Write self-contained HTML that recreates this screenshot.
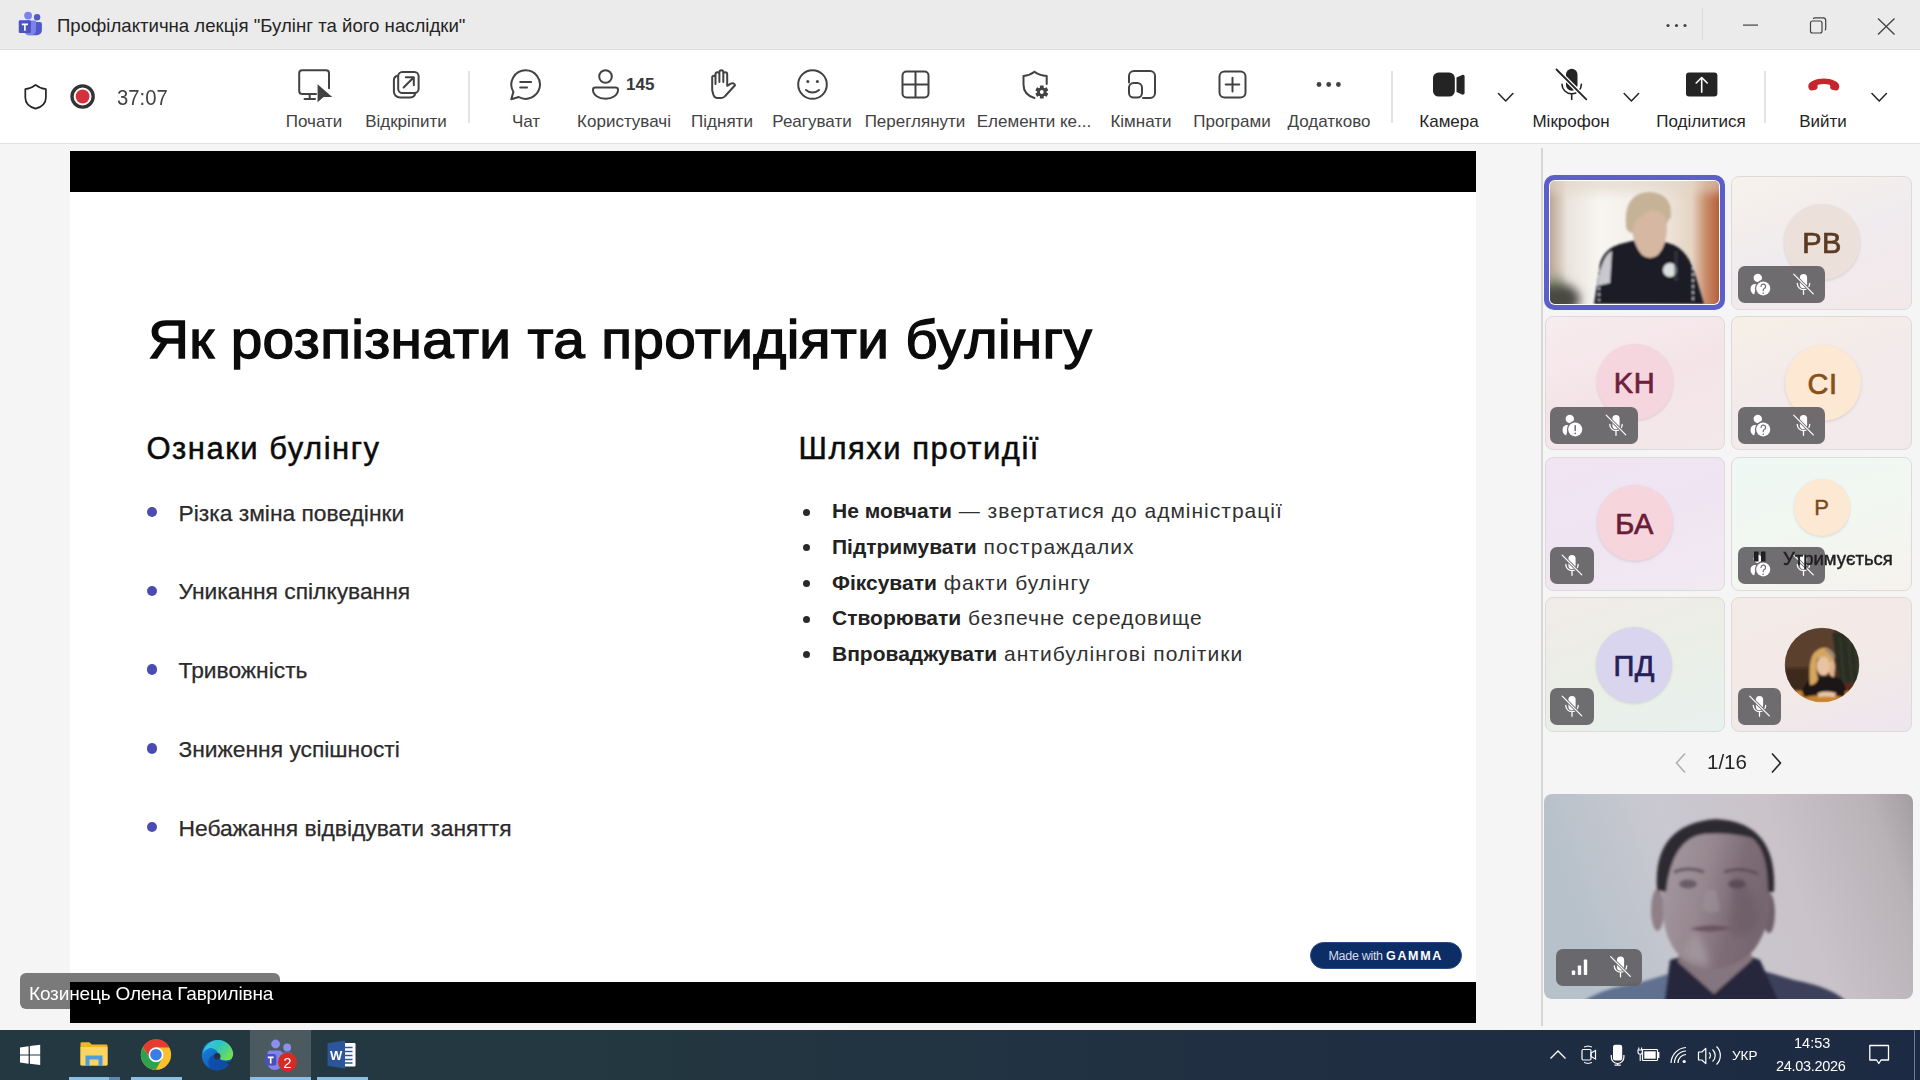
<!DOCTYPE html>
<html><head><meta charset="utf-8">
<style>
*{margin:0;padding:0;box-sizing:border-box}
html,body{width:1920px;height:1080px;overflow:hidden;background:#f5f5f5;font-family:"Liberation Sans",sans-serif;position:relative}
.a{position:absolute}
#titlebar{left:0;top:0;width:1920px;height:49px;background:#ebebeb}
#tbline{left:0;top:49px;width:1920px;height:1px;background:#dedede}
#toolbar{left:0;top:50px;width:1920px;height:93px;background:#fff}
#tlline{left:0;top:143px;width:1920px;height:1px;background:#e0e0e0}
#slide{left:70px;top:151px;width:1406px;height:872px;background:#fff}
.bar{left:0;width:1406px;background:#000}
#divider{left:1541px;top:148px;width:2px;height:878px;background:#d6d6d6}
#taskbar{left:0;top:1030px;width:1920px;height:50px;background:linear-gradient(90deg,#243841 0%,#233840 30%,#202f42 65%,#1d2a43 100%)}
.t{position:absolute;white-space:nowrap;line-height:1}
.lbl{position:absolute;white-space:nowrap;line-height:1;font-size:17px;color:#424242;top:113px;transform:translateX(-50%)}
.sep{position:absolute;width:2px;background:#e3e3e3;top:71px;height:52px}
.li{left:178.5px;font-size:22.8px;color:#2c2a2a;letter-spacing:0px;-webkit-text-stroke:0.25px #2c2a2a;margin-top:-0.5px}
.ri{left:832px;font-size:21px;color:#303030;letter-spacing:1px}
.ri b{color:#222;letter-spacing:0}
.rd{left:802.5px;width:7px;height:7px;border-radius:50%;background:#2a2a2a}
.tile{border:1px solid #e0d9d9;border-radius:8px}
.av{width:76px;height:76px;border-radius:50%;text-align:center;line-height:78px;font-size:29px;font-weight:normal;-webkit-text-stroke:0.7px currentColor;letter-spacing:0.5px;box-shadow:0 1px 3px rgba(0,0,0,.12)}
.pill{height:37px;border-radius:7px;background:rgba(96,94,98,.9)}
</style></head>
<body>
<div id="titlebar" class="a"></div>
<div id="tbline" class="a"></div>
<div id="toolbar" class="a"></div>
<div id="tlline" class="a"></div>

<!-- title text -->
<div class="t" style="left:57px;top:16.8px;font-size:18.6px;color:#242424">Профілактична лекція "Булінг та його наслідки"</div>
<div class="t" style="left:117px;top:86.5px;font-size:22.5px;color:#424242;transform:scaleX(0.9);transform-origin:0 0">37:07</div>
<div class="t" style="left:626px;top:76px;font-size:17px;font-weight:bold;color:#383838">145</div>

<div class="lbl" style="left:314px">Почати</div>
<div class="lbl" style="left:406px">Відкріпити</div>
<div class="lbl" style="left:526px">Чат</div>
<div class="lbl" style="left:624px">Користувачі</div>
<div class="lbl" style="left:722px">Підняти</div>
<div class="lbl" style="left:812px">Реагувати</div>
<div class="lbl" style="left:915px">Переглянути</div>
<div class="lbl" style="left:1034px">Елементи ке...</div>
<div class="lbl" style="left:1141px">Кімнати</div>
<div class="lbl" style="left:1232px">Програми</div>
<div class="lbl" style="left:1329px">Додатково</div>
<div class="lbl" style="left:1449px;color:#242424">Камера</div>
<div class="lbl" style="left:1571px;color:#242424">Мікрофон</div>
<div class="lbl" style="left:1701px;color:#242424">Поділитися</div>
<div class="lbl" style="left:1823px;color:#242424">Вийти</div>

<div class="sep" style="left:468px"></div>
<div class="sep" style="left:1391px"></div>
<div class="sep" style="left:1764px"></div>

<svg class="a" style="left:0;top:0" width="1920" height="150" viewBox="0 0 1920 150">
  <!-- teams logo -->
  <circle cx="28.1" cy="15.6" r="3.9" fill="#7b83eb"/>
  <circle cx="37.1" cy="17.3" r="3.2" fill="#5059c9"/>
  <path d="M32 21.9h8a1.9 1.9 0 0 1 1.9 1.9v6.4a5 5 0 0 1-5 5h-4.9z" fill="#5059c9"/>
  <path d="M26.6 20.6h8.4a1 1 0 0 1 1 1v8.5a5.5 5.5 0 0 1-5.5 5.5h-1a5.5 5.5 0 0 1-4.9-3z" fill="#7b83eb"/>
  <rect x="18.75" y="20.3" width="12.2" height="12.8" rx="1.3" fill="#4b53bc"/>
  <path d="M21.8 23.6h6.2v1.6h-2.3v5.6h-1.6v-5.6h-2.3z" fill="#fff"/>
  <!-- window controls -->
  <circle cx="1668" cy="25.5" r="1.6" fill="#424242"/><circle cx="1676.5" cy="25.5" r="1.6" fill="#424242"/><circle cx="1685" cy="25.5" r="1.6" fill="#424242"/>
  <rect x="1702" y="8" width="1" height="32" fill="#dcdcdc"/>
  <rect x="1743" y="24.5" width="15" height="1.2" fill="#424242"/>
  <rect x="1810.5" y="21" width="11.5" height="12" rx="2" fill="none" stroke="#424242" stroke-width="1.2"/>
  <path d="M1813.5 19v-0.2a1 1 0 0 1 1-1h8.7a2.5 2.5 0 0 1 2.5 2.5v8.7a1 1 0 0 1-1 1" fill="none" stroke="#424242" stroke-width="1.2"/>
  <path d="M1878 18.5l16.5 16M1894.5 18.5l-16.5 16" stroke="#424242" stroke-width="1.3"/>

  <!-- shield -->
  <path d="M35.6 84.8c-3.3 2.7-6.8 4-10.3 4.4v8.2c0 5.6 3.5 9.3 10.3 11.2 6.8-1.9 10.3-5.6 10.3-11.2v-8.2c-3.5-.4-7-1.7-10.3-4.4z" fill="none" stroke="#242424" stroke-width="1.7" stroke-linejoin="round"/>
  <!-- record -->
  <circle cx="82.6" cy="96.5" r="10.6" fill="#fff" stroke="#333" stroke-width="3.3"/>
  <circle cx="82.6" cy="96.5" r="6.9" fill="#d6303a"/>

  <g fill="none" stroke="#424242" stroke-width="2" stroke-linecap="round" stroke-linejoin="round">
    <!-- Pochaty: monitor + cursor -->
    <path d="M317 93.9H302.2a3 3 0 0 1-3-3V73.2a3 3 0 0 1 3-3h23.8a3 3 0 0 1 3 3v15"/>
    <path d="M309.7 94v5M304.5 99h10.5"/>
    <!-- Vidkripyty -->
    <path d="M397.5 75.8a4.5 4.5 0 0 0-3.6 4.4v11.3a6 6 0 0 0 6 6h10.8a4.6 4.6 0 0 0 4.4-3.4"/>
    <rect x="398.2" y="71.9" width="20.4" height="21" rx="4.2"/>
    <path d="M403.6 87.5l10.2-10.2M405.8 77.2h8v8"/>
    <!-- Chat -->
    <path d="M525.7 70.2a14.3 14.3 0 1 1-7 26.8l-7.4 2.2 2.1-7.3a14.3 14.3 0 0 1 12.3-21.7z"/>
    <path d="M520.2 81.9h10.9M520.2 87.6h6.8"/>
    <!-- person -->
    <circle cx="605.5" cy="76.5" r="6.3"/>
    <path d="M595.3 87.4h20.4a2.3 2.3 0 0 1 2.3 2.3c0 5.4-5.5 9-12.5 9s-12.5-3.6-12.5-9a2.3 2.3 0 0 1 2.3-2.3z"/>
    <!-- hand -->
    <path d="M715.5 84V74.3a1.95 1.95 0 0 1 3.9 0V82M719.4 82V72.3a1.95 1.95 0 0 1 3.9 0V82M723.3 82V74.3a1.95 1.95 0 0 1 3.9 0V85.8l3.6-2.1c1.8-1 3.8-.5 4.2 1.6L725.2 96c-1 1.3-2.4 2-4 2h-3.6c-2 0-3.6-1.3-4.2-3.2l-1.2-4.6V77.3a1.6 1.6 0 0 1 3.3 0V84"/>
    <!-- smiley -->
    <circle cx="812.5" cy="84.5" r="14.3"/>
    <path d="M806 90c3.6 3.3 9.4 3.3 13 0"/>
  </g><circle cx="807.8" cy="81.6" r="1.5" fill="#424242"/><circle cx="817.4" cy="81.6" r="1.5" fill="#424242"/><g fill="none" stroke="#424242" stroke-width="2" stroke-linecap="round" stroke-linejoin="round">
    <!-- grid -->
    <rect x="902.5" y="71.5" width="26" height="26" rx="4"/>
    <path d="M915.5 72.5v24M903.5 84.5h24"/>
    <!-- shield gear -->
    <path d="M1034.5 71.8c-3.3 2.6-7 3.9-11 4.3v8.3c0 6.7 4.1 11.5 11 13.6M1046.7 84V76.1c-4-.4-8.9-1.7-12.2-4.3"/>
    <!-- rooms -->
    <path d="M1129 82.5v-6.5a5 5 0 0 1 5-5h16a5 5 0 0 1 5 5v17a5 5 0 0 1-5 5h-7"/>
    <rect x="1129" y="83" width="13" height="14.6" rx="4.6"/>
    <!-- apps -->
    <rect x="1219.5" y="71.5" width="26" height="26" rx="5"/>
    <path d="M1232.5 77.8v13.6M1225.7 84.5h13.6"/>
    <!-- chevrons -->
    <path d="M1498.5 93.5l7.2 7.5 7.2-7.5M1624.2 93.5l7.2 7.5 7.2-7.5M1872 93.5l7.2 7.5 7.2-7.5" stroke="#242424" stroke-width="1.5"/>
  </g>
  <!-- cursor -->
  <path d="M317.6 84.3v18l6-5.2h8.6z" fill="#424242" stroke="#fff" stroke-width="1.6" stroke-linejoin="round" paint-order="stroke"/>
  <!-- gear -->
  <g transform="translate(1041.8 92)">
    <circle r="8.2" fill="#fff"/>
    <g fill="#424242">
      <circle r="4.6"/>
      <rect x="-1.9" y="-6.5" width="3.8" height="13" rx=".6"/>
      <rect x="-1.9" y="-6.5" width="3.8" height="13" rx=".6" transform="rotate(60)"/>
      <rect x="-1.9" y="-6.5" width="3.8" height="13" rx=".6" transform="rotate(120)"/>
    </g>
    <circle r="1.9" fill="#fff"/>
  </g>
  <!-- more dots -->
  <circle cx="1319" cy="84.5" r="2.4" fill="#424242"/><circle cx="1328.7" cy="84.5" r="2.4" fill="#424242"/><circle cx="1338.4" cy="84.5" r="2.4" fill="#424242"/>
  <!-- camera -->
  <rect x="1433" y="72.6" width="21.8" height="24" rx="5.5" fill="#242424"/>
  <path d="M1456.5 77.5l5.6-2.6a1.8 1.8 0 0 1 2.5 1.6v16.4a1.8 1.8 0 0 1-2.5 1.6l-5.6-2.6z" fill="#242424"/>
  <!-- mic muted -->
  <rect x="1566" y="68.8" width="11.5" height="22" rx="5.75" fill="#242424"/>
  <path d="M1562 84.2a9.7 9.7 0 0 0 19.4 0M1571.7 94v5.5" fill="none" stroke="#242424" stroke-width="1.6" stroke-linecap="round"/>
  <path d="M1556.5 69.5l29.8 29.8" stroke="#fff" stroke-width="4.5"/>
  <path d="M1556.5 69.5l29.8 29.8" stroke="#242424" stroke-width="1.8" stroke-linecap="round"/>
  <!-- share -->
  <rect x="1686" y="72.6" width="31.4" height="24" rx="3" fill="#242424"/>
  <path d="M1701.7 92.3V77.8M1696.2 83l5.5-5.5 5.5 5.5" fill="none" stroke="#fff" stroke-width="1.6" stroke-linecap="round" stroke-linejoin="round"/>
  <!-- hangup -->
  <path d="M1808.3 86.2c0-4.3 7.5-7.6 15.5-7.6s15.5 3.3 15.5 7.6c0 2.8-1.3 4.4-3.3 4.2l-3.9-.7c-1.4-.3-2-1.5-2-3v-1.8c-4-1.2-8.5-1.2-12.5 0v1.8c0 1.5-.6 2.7-2 3l-3.9.7c-2 .2-3.4-1.4-3.4-4.2z" fill="#c4262e"/>
</svg>

<div id="slide" class="a">
  <div class="a bar" style="top:0;height:41px"></div>
  <div class="a bar" style="top:831px;height:41px"></div>
</div>
<div class="t" style="left:148px;top:313px;font-size:53px;color:#0b0b0b;-webkit-text-stroke:1.3px #0b0b0b;letter-spacing:0.3px;transform:scaleX(1.072);transform-origin:0 0">Як розпізнати та протидіяти булінгу</div>
<div class="t" style="left:146.5px;top:433px;font-size:31px;color:#0b0b0b;letter-spacing:1.5px;-webkit-text-stroke:0.5px #0b0b0b">Ознаки булінгу</div>
<div class="t" style="left:798.5px;top:433px;font-size:31px;color:#0b0b0b;letter-spacing:1.5px;-webkit-text-stroke:0.5px #0b0b0b">Шляхи протидії</div>
<div class="a" style="left:146.8px;top:506.7px;width:10.5px;height:10.5px;border-radius:50%;background:#4a4cb3"></div>
<div class="a" style="left:146.8px;top:585.5px;width:10.5px;height:10.5px;border-radius:50%;background:#4a4cb3"></div>
<div class="a" style="left:146.8px;top:664.3px;width:10.5px;height:10.5px;border-radius:50%;background:#4a4cb3"></div>
<div class="a" style="left:146.8px;top:743.1px;width:10.5px;height:10.5px;border-radius:50%;background:#4a4cb3"></div>
<div class="a" style="left:146.8px;top:821.9px;width:10.5px;height:10.5px;border-radius:50%;background:#4a4cb3"></div>
<div class="t li" style="top:502px">Різка зміна поведінки</div>
<div class="t li" style="top:580.8px">Уникання спілкування</div>
<div class="t li" style="top:659.6px">Тривожність</div>
<div class="t li" style="top:738.4px">Зниження успішності</div>
<div class="t li" style="top:817.2px">Небажання відвідувати заняття</div>
<div class="a rd" style="top:508.8px"></div>
<div class="a rd" style="top:544.4px"></div>
<div class="a rd" style="top:580px"></div>
<div class="a rd" style="top:615.6px"></div>
<div class="a rd" style="top:651.2px"></div>
<div class="t ri" style="top:500.3px"><b>Не мовчати</b> — звертатися до адміністрації</div>
<div class="t ri" style="top:535.9px"><b>Підтримувати</b> постраждалих</div>
<div class="t ri" style="top:571.5px"><b>Фіксувати</b> факти булінгу</div>
<div class="t ri" style="top:607.1px"><b>Створювати</b> безпечне середовище</div>
<div class="t ri" style="top:642.7px"><b>Впроваджувати</b> антибулінгові політики</div>
<div class="a" style="left:1309.5px;top:942px;width:152.5px;height:27px;border-radius:13.5px;background:#0d2d66;border:1px solid #2a4a85"></div>
<div class="t" style="left:1328.5px;top:949.5px;font-size:12.5px;color:#d5dcea;letter-spacing:-0.3px">Made with <b style="color:#fff;letter-spacing:1.7px">GAMMA</b></div>

<!-- ============ RIGHT PANEL ============ -->
<div class="a" style="left:1544px;top:175px;width:181px;height:135px;background:#5b5fc7;border-radius:10px"></div>
<div class="a" style="left:1549px;top:180px;width:171px;height:125px;border-radius:6px;background:#fff"></div>
<svg class="a" style="left:1550px;top:181px" width="169" height="123" viewBox="0 0 169 123">
  <defs>
    <clipPath id="c1"><rect width="169" height="123" rx="5"/></clipPath>
    <filter id="bl1"><feGaussianBlur stdDeviation="5"/></filter>
    <filter id="bl2"><feGaussianBlur stdDeviation="1.2"/></filter>
    <linearGradient id="bg1" x1="0" x2="1" y1="0" y2="0">
      <stop offset="0" stop-color="#bca693"/><stop offset="0.1" stop-color="#e9e3dc"/><stop offset="0.3" stop-color="#f8f6f2"/><stop offset="0.62" stop-color="#f1ece5"/><stop offset="0.84" stop-color="#e5d4c2"/><stop offset="0.92" stop-color="#c98e6c"/><stop offset="1" stop-color="#b65f3a"/>
    </linearGradient>
  </defs>
  <g clip-path="url(#c1)">
    <rect width="169" height="123" fill="url(#bg1)"/>
    <g filter="url(#bl1)">
      <rect x="-10" y="-10" width="190" height="22" fill="#e2d6c8" opacity=".6"/>
      <ellipse cx="6" cy="118" rx="24" ry="16" fill="#4a4842"/>
      <ellipse cx="6" cy="100" rx="8" ry="7" fill="#6b8466" opacity=".5"/>
    </g>
    <g filter="url(#bl2)">
      <path d="M44 123 L50 82 Q55 66 74 62 L90 58 Q110 58 124 64 Q140 72 146 96 L154 123z" fill="#1b1d27"/>
      <path d="M47 105 Q52 74 62 70 L60 102z" fill="#e6e6ec" opacity=".85"/>
      <rect x="88" y="55" width="24" height="10" fill="#b99a88"/>
      <ellipse cx="99" cy="32" rx="21" ry="20" fill="#c6b397"/><path d="M82 46 Q82 30 100 29 Q118 30 117 48 Q116 66 108 74 Q100 80 92 74 Q83 64 82 46z" fill="#d6b7a2"/>
      <path d="M76 46 Q73 12 99 11 Q122 12 121 34 Q121 40 118 36 Q112 26 102 28 Q92 34 86 40 Q82 46 83 52 Q78 52 76 46z" fill="#c6b397"/>
      <circle cx="120" cy="89" r="7" fill="#dcdfe0"/>
      <path d="M49 88v32M143 80v40" stroke="#c8c8d0" stroke-width="2.2" stroke-dasharray="3 3" opacity=".8"/>
      <rect x="124" y="70" width="4" height="30" fill="#3a3c46" opacity=".6"/>
    </g>
  </g>
</svg>
<div class="a tile" style="left:1731px;top:176px;width:181px;height:134px;background:linear-gradient(160deg,#f7f2ea 0%,#f0ebee 50%,#f3e8ea 100%)"></div>
<div class="a tile" style="left:1545px;top:316px;width:180px;height:134px;background:linear-gradient(160deg,#f7ecef 0%,#f4e4e8 50%,#f3e8ea 100%)"></div>
<div class="a tile" style="left:1731px;top:316px;width:181px;height:134px;background:linear-gradient(160deg,#f7f0e6 0%,#f2eaeb 50%,#f1e9ea 100%)"></div>
<div class="a tile" style="left:1545px;top:456.5px;width:180px;height:134px;background:linear-gradient(160deg,#f1e4f3 0%,#efe5f2 50%,#f1eaf2 100%)"></div>
<div class="a tile" style="left:1731px;top:456.5px;width:181px;height:134px;background:linear-gradient(160deg,#eef8f4 0%,#f2f7f1 50%,#f6f2ee 100%)"></div>
<div class="a tile" style="left:1545px;top:597px;width:180px;height:134.5px;background:linear-gradient(160deg,#f1ebe7 0%,#eaeee6 50%,#e9f1ef 100%)"></div>
<div class="a tile" style="left:1731px;top:597px;width:181px;height:134.5px;background:linear-gradient(160deg,#f3ebe7 0%,#f3e9e6 50%,#ede6ee 100%)"></div>

<div class="a av" style="left:1784px;top:204px;background:#ece0da;color:#5a3a22">PB</div>
<div class="a av" style="left:1596.5px;top:343.5px;background:#f5d6df;color:#6e1f3e">KH</div>
<div class="a av" style="left:1784.5px;top:344.5px;background:#fde8d4;color:#87501a">CI</div>
<div class="a av" style="left:1596.5px;top:485.3px;background:#f6d5dc;color:#6a1c38">БА</div>
<div class="a av" style="left:1793.5px;top:479.3px;width:56.6px;height:56.6px;background:#fde8d4;color:#7a4a1c;font-size:22px;line-height:58px;-webkit-text-stroke:0.4px currentColor">Р</div>
<div class="a av" style="left:1596.2px;top:626.6px;background:#d9d5ee;color:#24215a">ПД</div>
<svg class="a" style="left:1784.4px;top:626.5px" width="76" height="76" viewBox="0 0 76 76">
  <defs>
    <clipPath id="c8"><circle cx="38" cy="38" r="37.3"/></clipPath>
    <filter id="bl8"><feGaussianBlur stdDeviation="1"/></filter>
  </defs>
  <g clip-path="url(#c8)" filter="url(#bl8)">
    <rect width="76" height="76" fill="#4b3223"/>
    <rect x="0" y="0" width="50" height="40" fill="#5b3f2d"/>
    <rect x="0" y="42" width="30" height="20" fill="#3e2a1e"/>
    <path d="M48 6 L76 6 L76 58 L56 58z" fill="#2b2d22"/>
    <path d="M56 10 L60 56M64 8 L68 56M71 12 L74 50" stroke="#414a35" stroke-width="1.5" opacity=".6"/>
    <rect x="58" y="56" width="18" height="14" fill="#5a2a1e"/>
    <rect x="0" y="64" width="76" height="12" fill="#c8842e"/>
    <path d="M18 64 Q22 52 34 50 L50 49 Q60 52 62 62 L60 70 Q40 66 20 70z" fill="#1c1414"/>
    <path d="M26 58 Q24 34 30 26 Q36 20 43 21 Q50 24 50 32 L50 44 Q46 40 46 34 Q40 28 33 32 Q31 42 34 52 Q32 58 26 58z" fill="#d6a55f"/>
    <ellipse cx="39.5" cy="39" rx="7" ry="9.5" fill="#e8c39f"/>
    <path d="M46 33 Q51 33 51 40 L50 50 Q46 50 45 45z" fill="#e2b48e"/>
    <path d="M34 66 Q42 63 52 66 L51 70 Q42 69 34 70z" fill="#e8c6a6"/>
    <path d="M41 22 Q49 21 51 30 L49 33 Q46 26 41 24z" fill="#9a8a78"/>
  </g>
</svg>

<!-- pills -->
<div class="a pill" style="left:1738px;top:266px;width:87px">
  <svg width="87" height="37" viewBox="0 0 87 37"><g class="ppq"></g></svg></div>
<div class="a pill" style="left:1550px;top:407px;width:88px"></div>
<div class="a pill" style="left:1738px;top:407px;width:87px"></div>
<div class="a pill" style="left:1550px;top:547px;width:44px"></div>
<div class="a pill" style="left:1738px;top:547px;width:87px"></div>
<div class="a pill" style="left:1550px;top:688px;width:44px"></div>
<div class="a pill" style="left:1738px;top:688px;width:43px"></div>

<svg class="a" style="left:0;top:0" width="1920" height="1080" viewBox="0 0 1920 1080">
  <defs>
    <g id="mic"><rect x="-3.6" y="-11" width="7.2" height="14.2" rx="3.6" fill="#fff"/><path d="M-6.2 -1.5a6.2 6.2 0 0 0 12.4 0M0 4.8v4.5" fill="none" stroke="#fff" stroke-width="1.3" stroke-linecap="round"/><path d="M-9.8 -10.8l19.6 19.6" stroke="#6f6e71" stroke-width="3"/><path d="M-9.8 -10.8l19.6 19.6" stroke="#fff" stroke-width="1.2" stroke-linecap="round"/></g>
    <g id="pq"><circle cx="-2.8" cy="-7" r="4.2" fill="#fff"/><path d="M-6.5 9.5a6 6 0 0 1-3.5-6c0-3 2-4.5 4.5-4.5h2z" fill="#fff"/><circle cx="2.6" cy="3.5" r="8.3" fill="#6f6e71"/><circle cx="2.6" cy="3.5" r="7" fill="#fff"/><path d="M0.4 1.5a2.3 2.3 0 1 1 3.2 2.1c-.8.4-1 .9-1 1.7v.5" fill="none" stroke="#6f6e71" stroke-width="1.2" stroke-linecap="round"/><circle cx="2.6" cy="8.3" r=".8" fill="#6f6e71"/></g>
    <g id="pa"><circle cx="-2.8" cy="-7" r="4.2" fill="#fff"/><path d="M-6.5 9.5a6 6 0 0 1-3.5-6c0-3 2-4.5 4.5-4.5h2z" fill="#fff"/><circle cx="2.6" cy="3.5" r="8.3" fill="#6f6e71"/><circle cx="2.6" cy="3.5" r="7" fill="#fff"/><path d="M2.6 -0.2v4.8" stroke="#6f6e71" stroke-width="1.5" stroke-linecap="round"/><circle cx="2.6" cy="7.4" r=".9" fill="#6f6e71"/></g>
  </defs>
  <use href="#pq" x="1760.6" y="284.9"/><use href="#mic" x="1803.5" y="285"/>
  <use href="#pa" x="1572.6" y="425.9"/><use href="#mic" x="1616" y="426"/>
  <use href="#pq" x="1760.6" y="425.9"/><use href="#mic" x="1803.5" y="426"/>
  <use href="#mic" x="1572" y="566"/>
  <use href="#pq" x="1760.6" y="565.9"/><use href="#mic" x="1803.5" y="566"/>
  <path d="M1754 551.5h4.5v10h-4.5zM1761 551.5h4.5v10h-4.5z" fill="#1f1f1f"/>
  <use href="#mic" x="1572" y="707"/>
  <use href="#mic" x="1759.5" y="707"/>
  <!-- pager -->
  <path d="M1685 753.5l-8.5 9.5 8.5 9.5" fill="none" stroke="#b0b0b0" stroke-width="1.6"/>
  <path d="M1772 753.5l8.5 9.5-8.5 9.5" fill="none" stroke="#242424" stroke-width="1.6"/>
</svg>
<div class="t" style="left:1783px;top:549.5px;font-size:18.5px;color:#1f1f1f;-webkit-text-stroke:0.45px #1f1f1f">Утримується</div>
<div class="t" style="left:1707px;top:752px;font-size:20.5px;color:#242424">1/16</div>

<!-- big video -->
<svg class="a" style="left:1544px;top:794px" width="369" height="205" viewBox="0 0 369 205">
  <defs>
    <clipPath id="cv"><rect width="369" height="205" rx="8"/></clipPath>
    <linearGradient id="vbg" x1="0" x2="1" y1="0.2" y2="0">
      <stop offset="0" stop-color="#b6c1ca"/><stop offset="0.3" stop-color="#c9c8d0"/><stop offset="0.6" stop-color="#cac3c9"/><stop offset="0.88" stop-color="#b9b2b7"/><stop offset="1" stop-color="#a39da2"/>
    </linearGradient>
    <linearGradient id="face" x1="0" x2="1" y1="0" y2="0.3">
      <stop offset="0" stop-color="#a69aa1"/><stop offset="0.45" stop-color="#978890"/><stop offset="0.75" stop-color="#7e6d77"/><stop offset="1" stop-color="#76666f"/>
    </linearGradient>
    <filter id="bv"><feGaussianBlur stdDeviation="1.5"/></filter>
    <filter id="bv3"><feGaussianBlur stdDeviation="3.5"/></filter>
  </defs>
  <g clip-path="url(#cv)">
    <rect width="369" height="205" fill="url(#vbg)"/>
    <g filter="url(#bv)">
      <path d="M36 210 Q56 194 98 188 L124 180 L132 210z" fill="#60708f"/>
      <path d="M216 176 L250 186 Q292 194 304 210 L206 210z" fill="#3c405a"/>
      <path d="M120 210 L126 166 Q150 158 170 160 Q196 158 216 166 L236 210z" fill="#28263c"/>
      <path d="M136 150 L134 168 Q150 182 170 200 Q192 180 208 166 L206 148z" fill="#85757e"/>
      <ellipse cx="113.5" cy="116" rx="6.5" ry="21" fill="#8f7f87"/>
      <ellipse cx="225" cy="119" rx="6" ry="20" fill="#6f5f68"/>
      <path d="M118 72 Q118 38 172 36 Q226 38 226 74 L226 116 Q222 140 210 156 Q190 176 164 175 Q140 172 128 152 Q119 136 119 116z" fill="url(#face)"/>
      <g filter="url(#bv3)">
        <path d="M150 138 Q166 156 164 172 Q150 170 140 160z" fill="#a89ca3" opacity=".7"/>
        <path d="M190 80 Q214 90 214 130 Q200 150 186 140z" fill="#6b5a65" opacity=".6"/>
      </g>
      <path d="M130 78 Q144 72 160 78 M180 78 Q196 72 214 80" stroke="#54434f" stroke-width="3" fill="none" opacity=".8"/>
      <ellipse cx="144" cy="90" rx="9" ry="4.5" fill="#5f505c" opacity=".8"/>
      <ellipse cx="193" cy="90" rx="9" ry="4.5" fill="#574853" opacity=".85"/>
      <path d="M162 96 L158 114 Q166 122 176 116 L172 96z" fill="#a2959c" opacity=".5"/>
      <path d="M146 135 Q166 128 188 134 Q166 141 146 135z" fill="#6c5260"/>
      <path d="M113 96 Q108 30 172 25 Q234 28 230 98 L224 98 Q224 56 208 44 Q186 38 160 40 Q128 44 122 98z" fill="#2f2a33"/>
    </g>
  </g>
</svg>
<div class="a pill" style="left:1556px;top:949px;width:86px"></div>
<svg class="a" style="left:1556px;top:949px" width="86" height="37" viewBox="0 0 86 37">
  <rect x="15.8" y="21.5" width="3.4" height="4.5" rx=".8" fill="#fff"/>
  <rect x="21.8" y="16.5" width="3.4" height="9.5" rx=".8" fill="#fff"/>
  <rect x="27.8" y="10.5" width="3.4" height="15.5" rx=".8" fill="#fff"/>
  <use href="#mic" x="64.5" y="18.5"/>
</svg>

<!-- name label -->
<div class="a" style="left:20px;top:973px;width:260px;height:36px;border-radius:6px;background:#7a7a7a"></div>
<div class="a" style="left:70px;top:982px;width:1406px;height:41px;background:#000"></div>
<div id="divider" class="a"></div>
<div id="taskbar" class="a"></div>
<div class="a" style="left:250px;top:1030px;width:61px;height:50px;background:#4a5a5e"></div>
<div class="a" style="left:69px;top:1077px;width:40px;height:3px;background:#8cbfe6"></div>
<div class="a" style="left:109px;top:1077px;width:11px;height:3px;background:#5f88ab"></div>
<div class="a" style="left:131px;top:1077px;width:51px;height:3px;background:#8cbfe6"></div>
<div class="a" style="left:250px;top:1077px;width:61px;height:3px;background:#8cbfe6"></div>
<div class="a" style="left:317px;top:1077px;width:51px;height:3px;background:#8cbfe6"></div>
<svg class="a" style="left:0;top:1030px" width="1920" height="50" viewBox="0 1030 1920 50">
  <!-- windows -->
  <path d="M20 1047.5l8.6-1.3v8.2H20zM29.9 1046l10.3-1.3v9.7H29.9zM20 1055.6h8.6v8.2l-8.6-1.2zM29.9 1055.6h10.3v9.5l-10.3-1.4z" fill="#fff"/>
  <!-- explorer -->
  <path d="M80.5 1043.5a1.3 1.3 0 0 1 1.3-1.3h7.5l2.5 2.3h14.4a1.3 1.3 0 0 1 1.3 1.3v18.5a1.3 1.3 0 0 1-1.3 1.3H81.8a1.3 1.3 0 0 1-1.3-1.3z" fill="#f0b523"/>
  <path d="M80.5 1047h27v17.3a1.3 1.3 0 0 1-1.3 1.3H81.8a1.3 1.3 0 0 1-1.3-1.3z" fill="#fcd462"/>
  <path d="M85.5 1055.5h17v10.5h-4v-6.5h-9v6.5h-4z" fill="#4a9ee0"/>
  <!-- chrome -->
  <circle cx="156" cy="1054.7" r="15.1" fill="#fbc02d"/>
  <path d="M143 1046.9A15.1 15.1 0 0 1 169.6 1047.5L156 1047.5L149.8 1058.3z" fill="#e53b30"/>
  <path d="M143 1046.9A15.1 15.1 0 0 0 155.8 1069.8L162.2 1058.3L149.8 1058.3z" fill="#2fa24f"/>
  <circle cx="156" cy="1054.7" r="7.4" fill="#fff"/>
  <circle cx="156" cy="1054.7" r="5.8" fill="#3b7de8"/>
  <!-- edge -->
  <defs>
    <linearGradient id="eg1" x1="0" y1="0" x2="1" y2="0.6"><stop offset="0" stop-color="#3cc3f0"/><stop offset=".5" stop-color="#2ec5c0"/><stop offset="1" stop-color="#6fdc5a"/></linearGradient>
    <linearGradient id="eg2" x1="0" y1="0" x2="0.6" y2="1"><stop offset="0" stop-color="#1b8ae8"/><stop offset="1" stop-color="#0c55b0"/></linearGradient>
  </defs>
  <path d="M218 1040a15.2 15.2 0 0 1 15 14.5l-3 8.5a15.2 15.2 0 1 1-12-23z" fill="url(#eg2)"/>
  <path d="M211 1070 Q205 1060 213 1055 Q220 1060 232 1061 Q226 1070 211 1070z" fill="#1049a5" opacity=".8"/>
  <path d="M203 1053.5A15.2 15.2 0 0 1 233.2 1053.5Q233.5 1060 226.5 1060.5Q219.5 1061 219 1056Q218 1049 211 1048Q205.5 1048.5 203 1053.5z" fill="url(#eg1)"/>
  <circle cx="217.2" cy="1056.2" r="3.3" fill="#223440"/>
  <path d="M233.5 1057.5Q232 1062 226.5 1062.5L229.5 1064.5L234 1064z" fill="#233740"/>
  <!-- teams -->
  <circle cx="275.6" cy="1044" r="4.4" fill="#8b8ff0"/>
  <circle cx="287.2" cy="1047.5" r="3.9" fill="#8b8ff0"/>
  <path d="M281 1052.5h9a2 2 0 0 1 2 2v6a6.5 6.5 0 0 1-6.5 6.5h-4.5z" fill="#7b7fe6"/>
  <path d="M268.5 1050.6h11a2.5 2.5 0 0 1 2.5 2.5v10a7 7 0 0 1-7 7h-.5a7 7 0 0 1-7-7v-10a2.5 2.5 0 0 1 2.5-2.5z" fill="#7f84e8"/>
  <rect x="265" y="1054" width="11.3" height="11.6" rx="2.5" fill="#4a4fb8"/>
  <path d="M267.8 1056.6h5.8v1.6h-2.1v5.2h-1.6v-5.2h-2.1z" fill="#fff"/>
  <circle cx="287.5" cy="1061.9" r="9.5" fill="#d42c24"/>
  <text x="287.5" y="1067.5" font-family="Liberation Sans" font-size="15" fill="#fff" text-anchor="middle">2</text>
  <!-- word -->
  <rect x="337" y="1043" width="18.5" height="23.5" rx="1.2" fill="#fff"/>
  <path d="M340 1047.5h12.5M340 1051.5h12.5M340 1055.5h12.5M340 1059.5h12.5M340 1063h12.5" stroke="#2b579a" stroke-width="1.6"/>
  <path d="M327.5 1043.3l17.5-2.8v28l-17.5-2.8z" fill="#2b579a"/>
  <text x="330" y="1060" font-family="Liberation Sans" font-weight="bold" font-size="13" fill="#fff">W</text>
  <!-- tray -->
  <path d="M1550.5 1058.5l7.5-7.5 7.5 7.5" fill="none" stroke="#fff" stroke-width="1.3"/>
  <rect x="1582" y="1049.5" width="9" height="10.5" rx="1.2" fill="none" stroke="#fff" stroke-width="1.2"/>
  <path d="M1591 1053l4.5-2.5v8.5l-4.5-2.5z" fill="none" stroke="#fff" stroke-width="1.2"/>
  <path d="M1584 1047a9 9 0 0 1 8 0M1584 1062.5a9 9 0 0 0 8 0" fill="none" stroke="#fff" stroke-width="1"/>
  <rect x="1613" y="1044.8" width="9.2" height="15.6" rx="2.2" fill="#fff"/>
  <path d="M1611.3 1055v2.2a6.3 6.3 0 0 0 12.6 0V1055M1617.6 1063.5v1.8M1614.5 1065.1h6.3" fill="none" stroke="#fff" stroke-width="1.2"/>
  <path d="M1638.8 1047.5v2.5M1641.6 1047.5v2.5M1638 1050h4.4v2a2.2 2.2 0 0 1-4.4 0zM1640.2 1054v7" fill="none" stroke="#fff" stroke-width="1.1"/>
  <rect x="1642.5" y="1049.5" width="15" height="11" rx=".8" fill="none" stroke="#fff" stroke-width="1.2"/>
  <rect x="1644.3" y="1051.3" width="11.4" height="7.4" fill="#fff"/>
  <rect x="1657.8" y="1052" width="1.6" height="6" fill="#fff"/>
  <path d="M1671 1063a16 16 0 0 1 15-15.5M1674.5 1063a12 12 0 0 1 11.5-12M1678 1063a8.5 8.5 0 0 1 8-8.5" fill="none" stroke="#fff" stroke-width="1.2"/>
  <circle cx="1684.2" cy="1061.5" r="1.6" fill="#fff"/>
  <path d="M1698.5 1052h3.3l4-3.6v15.2l-4-3.6h-3.3z" fill="none" stroke="#fff" stroke-width="1.2" stroke-linejoin="round"/>
  <path d="M1709 1052.5a3.8 3.8 0 0 1 0 6M1712.5 1049.5a8 8 0 0 1 0 12M1716.5 1046.5a12.5 12.5 0 0 1 0 18" fill="none" stroke="#fff" stroke-width="1.2"/>
  <path d="M1869.8 1045.5h18.7v14.5h-7.5l-2.2 3.5-2.2-3.5h-6.8z" fill="none" stroke="#fff" stroke-width="1.3" stroke-linejoin="round"/>
  <rect x="1914" y="1030" width="1" height="50" fill="#6b7a8e"/>
</svg>
<div class="t" style="left:1732px;top:1049px;font-size:13.5px;color:#fff">УКР</div>
<div class="t" style="left:1794px;top:1036px;font-size:14.5px;color:#fff">14:53</div>
<div class="t" style="left:1776px;top:1058.5px;font-size:14.5px;color:#fff;letter-spacing:-0.3px">24.03.2026</div>

<div class="t" style="left:29px;top:983.5px;font-size:19px;color:#fff;letter-spacing:-0.15px">Козинець Олена Гаврилівна</div>
</body></html>
